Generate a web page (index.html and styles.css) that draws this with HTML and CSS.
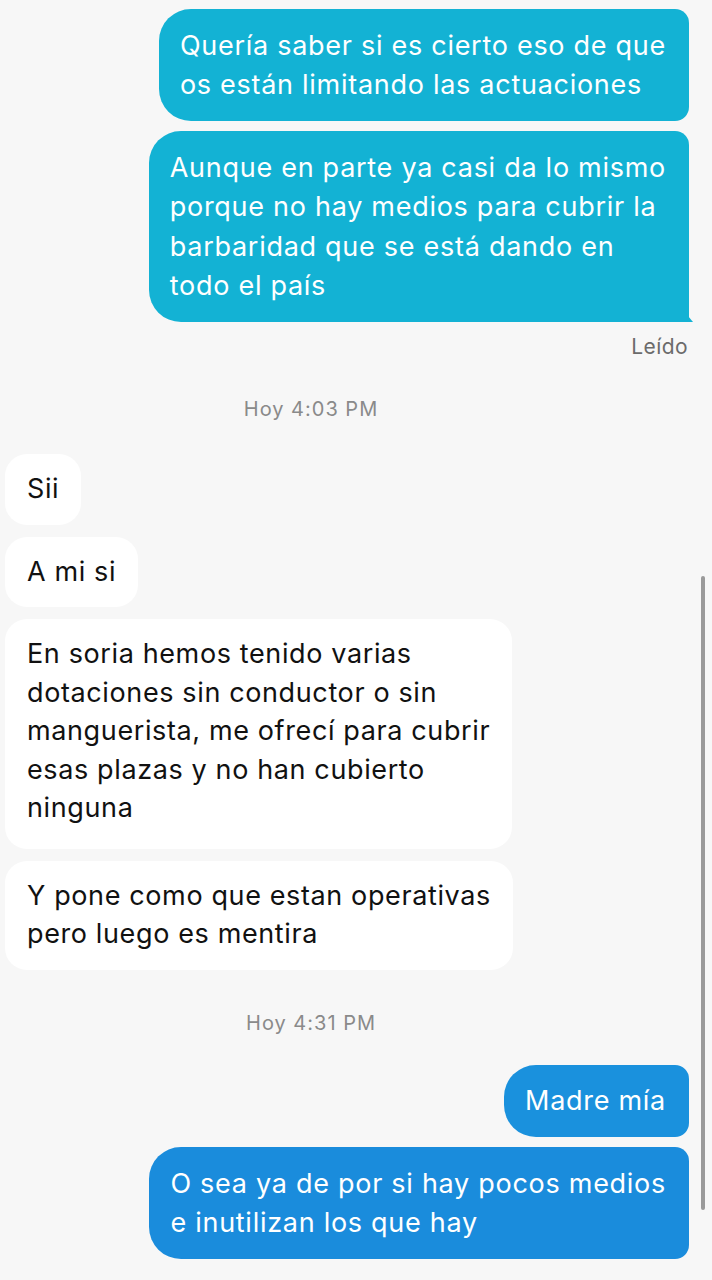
FILE: index.html
```html
<!DOCTYPE html>
<html lang="es">
<head>
  <meta charset="UTF-8">
  <meta name="viewport" content="width=device-width, initial-scale=1.0">
  <title>Mensajes</title>
  <link rel="stylesheet" href="styles.css">
</head>
<body>

  <div class="chat">
    <!-- Mensajes enviados -->
    <div class="row out">
      <div class="bubble sent cyan">Quería saber si es cierto eso de que<br>os están limitando las actuaciones</div>
    </div>
    <div class="row out next">
      <div class="bubble sent cyan tail">Aunque en parte ya casi da lo mismo<br>porque no hay medios para cubrir la<br>barbaridad que se está dando en<br>todo el país</div>
    </div>
    <div class="status">Leído</div>

    <div class="stamp first">Hoy 4:03 PM</div>

    <!-- Mensajes recibidos -->
    <div class="row in">
      <div class="bubble received">Sii</div>
    </div>
    <div class="row in gap">
      <div class="bubble received">A mi si</div>
    </div>
    <div class="row in gap">
      <div class="bubble received long">En soria hemos tenido varias<br>dotaciones sin conductor o sin<br>manguerista, me ofrecí para cubrir<br>esas plazas y no han cubierto<br>ninguna</div>
    </div>
    <div class="row in gap">
      <div class="bubble received">Y pone como que estan operativas<br>pero luego es mentira</div>
    </div>

    <div class="stamp second">Hoy 4:31 PM</div>

    <div class="row out">
      <div class="bubble sent blue">Madre mía</div>
    </div>
    <div class="row out next">
      <div class="bubble sent blue dark">O sea ya de por si hay pocos medios<br>e inutilizan los que hay</div>
    </div>
  </div>

  <div class="scrollbar"></div>

</body>
</html>
```

FILE: styles.css
```css
/* General styles */
body {
  margin: 0;
  padding: 0;
  background-color: #f7f7f7;
  font-family: Inter, "Liberation Sans", Arial, sans-serif;
  width: 712px;
  height: 1280px;
  overflow: hidden;
  position: relative;
}

.chat {
  display: flex;
  flex-direction: column;
  padding: 9px 23px 0 5px;
}

.row {
  display: flex;
}

.row.out {
  justify-content: flex-end;
}

.row.in {
  justify-content: flex-start;
}

.row.next {
  margin-top: 10px;
}

.row.gap {
  margin-top: 12px;
}

.bubble {
  font-size: 27px;
  white-space: nowrap;
  position: relative;
}

.bubble.sent {
  color: #ffffff;
  line-height: 39.5px;
  letter-spacing: 0.72px;
  padding: 16.5px 23px 16.5px 21px;
  border-radius: 32px 14px 14px 32px;
}

.bubble.cyan {
  background-color: #13b2d4;
}

.bubble.blue {
  background-color: #1a91dd;
}

.bubble.dark {
  background-color: #1a8cdc;
}

.bubble.received {
  color: #111111;
  background-color: #ffffff;
  line-height: 38.5px;
  letter-spacing: 0.62px;
  padding: 16px 22px;
  border-radius: 22px;
}

.bubble.long {
  padding-bottom: 21px;
}

/* little tail on the last sent bubble */
.bubble.tail {
  border-bottom-right-radius: 4px;
}

.bubble.tail::after {
  content: "";
  position: absolute;
  right: -4px;
  bottom: 0;
  width: 10px;
  height: 12px;
  background-color: #13b2d4;
  clip-path: polygon(0 0, 100% 100%, 0 100%);
}

.status {
  text-align: right;
  font-size: 21px;
  line-height: 24px;
  letter-spacing: 0.4px;
  color: #6b6b6b;
  margin-top: 13px;
  padding-right: 1px;
}

.stamp {
  text-align: center;
  font-size: 20px;
  line-height: 24px;
  letter-spacing: 1px;
  color: #8a8a8a;
  padding-right: 72px;
}

.stamp.first {
  margin-top: 38px;
  margin-bottom: 33px;
}

.stamp.second {
  margin-top: 41px;
  margin-bottom: 30px;
}

.scrollbar {
  position: absolute;
  right: 7px;
  top: 576px;
  width: 4px;
  height: 634px;
  border-radius: 2px;
  background-color: #9a9a9a;
}
```
